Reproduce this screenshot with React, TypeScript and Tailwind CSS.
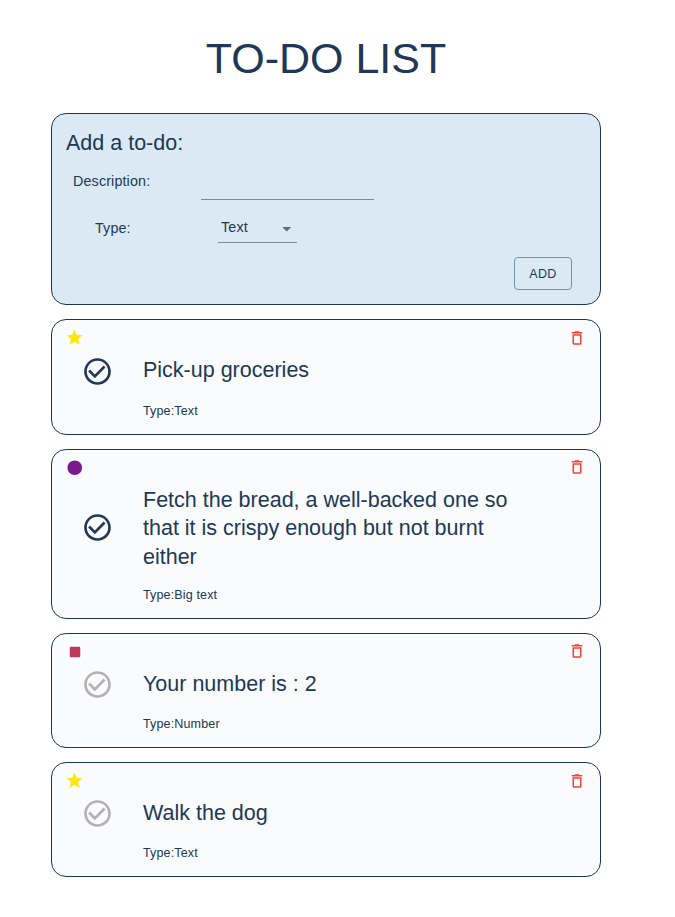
import React from "react";

type Kind = "Text" | "Big text" | "Number";
type Todo = { text: string; type: Kind; done: boolean; height: string; caption: string; check: string; trash: string };

const todos: Todo[] = [
  { text: "Pick-up groceries", type: "Text", done: true, height: "h-[116px]", caption: "mt-[16.500px]", check: "mt-[9px]", trash: "mt-[9px]" },
  {
    text: "Fetch the bread, a well-backed one so that it is crispy enough but not burnt either",
    type: "Big text",
    done: true,
    height: "h-[170px]",
    caption: "mt-[14px]",
    check: "mt-[35px]",
    trash: "mt-[8px]",
  },
  { text: "Your number is : 2", type: "Number", done: false, height: "h-[115px]", caption: "mt-[15.500px]", check: "mt-[8px]", trash: "mt-[8px]" },
  { text: "Walk the dog", type: "Text", done: false, height: "h-[115px]", caption: "mt-[15.500px]", check: "mt-[8px]", trash: "mt-[9px]" },
];

function KindIcon({ type }: { type: Kind }) {
  if (type === "Text")
    return (
      <svg viewBox="0 0 24 24" className="size-[19px] shrink-0 fill-[#ffe60a]">
        <path d="M12 17.27 18.18 21l-1.64-7.03L22 9.24l-7.19-.61L12 2 9.19 8.63 2 9.24l5.46 4.73L5.82 21z" />
      </svg>
    );
  if (type === "Big text")
    return (
      <svg viewBox="0 0 24 24" className="size-[17.500px] shrink-0 fill-[#7b1a8b]">
        <circle cx="12" cy="12" r="10" />
      </svg>
    );
  return (
    <svg viewBox="0 0 24 24" className="size-[14px] shrink-0 fill-[#bd3a5c]">
      <rect x="3" y="3" width="18" height="18" rx="2" />
    </svg>
  );
}

function Card({ todo }: { todo: Todo }) {
  return (
    <article className={`${todo.height} flex rounded-[15px] border border-[#1d3557] bg-[#fafbfd]`}>
      <div className="flex w-[91px] shrink-0 flex-col">
        <div className="ml-[13px] mt-[8px] flex h-[19px] w-[19px] items-center justify-center">
          <KindIcon type={todo.type} />
        </div>
        <div className={`ml-[30px] ${todo.check}`}>
          <svg viewBox="0 0 24 24" className={`size-[31px] shrink-0 ${todo.done ? "fill-[#213957]" : "fill-[#b4b1b1]"}`}>
            <path transform="translate(-.4 -.4) scale(1.033)" d="M16.59 7.58 10 14.17l-3.59-3.58L5 12l5 5 8-8zM12 2C6.48 2 2 6.48 2 12s4.48 10 10 10 10-4.48 10-10S17.52 2 12 2m0 18c-4.42 0-8-3.58-8-8s3.58-8 8-8 8 3.58 8 8-3.58 8-8 8" />
          </svg>
        </div>
      </div>
      <div className="w-[380px] pt-[35.500px]">
        <h2 className="text-[21.500px] leading-[28.500px]">{todo.text}</h2>
        <p className={`${todo.caption} text-[12.540px] leading-[20px] tracking-[.134px]`}>Type:{todo.type}</p>
      </div>
      <svg viewBox="0 0 24 24" className={`ml-auto mr-[14px] size-[18px] fill-[#f44336] ${todo.trash}`}>
        <path d="M16 9v10H8V9zm-1.500-6h-5l-1 1H5v2h14V4h-3.500zM18 7H6v12c0 1.100.9 2 2 2h8c1.100 0 2-.9 2-2z" />
      </svg>
    </article>
  );
}

export default function App() {
  return (
    <main className="ml-[51px] w-[550px] pt-[33px] font-['Liberation_Sans',Arial,sans-serif] text-[#203856]">
      <h1 className="h-[80px] text-center text-[43px] leading-[50px]">TO-DO LIST</h1>
      <section className="mb-[14px] h-[192px] rounded-[15px] border border-[#1d3557] bg-[#dbe9f4] pl-[14px] pr-[28px] pt-[15px]">
        <h2 className="h-[28px] text-[21.500px] leading-[29px]">Add a to-do:</h2>
        <div className="flex h-[43px]">
          <label className="w-[135px] pl-[7px] pt-[14px] text-[14.330px] leading-[20px] tracking-[.134px]">Description:</label>
          <input aria-label="Description" className="w-[173px] border-b border-[#7f8b93] bg-transparent outline-none" />
        </div>
        <div className="flex h-[43px]">
          <label className="w-[152px] pl-[29px] pt-[18px] text-[14.330px] leading-[20px] tracking-[.134px]">Type:</label>
          <div className="flex w-[79px] items-center justify-between border-b border-[#7f8b93] pl-[3px] pt-[12px] text-[14.330px] tracking-[.134px]">
            <span className="pt-[2px]">Text</span>
            <svg viewBox="0 0 24 24" className="mt-[4px] size-[21.500px] fill-[#646b71]"><path d="m7 10 5 5 5-5z" /></svg>
          </div>
        </div>
        <button className="ml-auto mt-[14px] flex h-[33px] w-[58px] items-center justify-center rounded-[4px] border border-[#7c8fa6] pt-[1px] text-[12.540px] tracking-[.358px]">ADD</button>
      </section>
      <div className="flex flex-col gap-[14px]">
        {todos.map((todo) => <Card key={todo.text} todo={todo} />)}
      </div>
    </main>
  );
}
